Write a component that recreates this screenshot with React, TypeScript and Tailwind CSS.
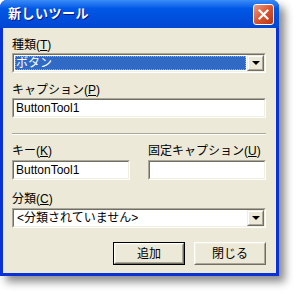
import React from 'react';

const font = { fontFamily: '"Liberation Sans", "Noto Sans CJK JP", sans-serif' };

const Label: React.FC<{ text: string; accel: string }> = ({ text, accel }) => (
  <div className="text-[12px] leading-[14px] text-black h-[14px] whitespace-nowrap">
    {text}(<span className="underline">{accel}</span>)
  </div>
);

const Sunken: React.FC<{ className?: string; children?: React.ReactNode }> = ({ className = '', children }) => (
  <div className={`border border-t-[#ACA899] border-l-[#ACA899] border-b-white border-r-white ${className}`}>
    <div className="h-full border border-t-[#716F64] border-l-[#716F64] border-b-[#F1EFE2] border-r-[#F1EFE2] bg-white flex items-center">
      {children}
    </div>
  </div>
);

const DropButton = () => (
  <div className="w-[17px] h-full shrink-0 border border-t-[#F1EFE2] border-l-[#F1EFE2] border-b-[#716F64] border-r-[#716F64] bg-[#ECE9D8]">
    <div className="h-full border border-t-white border-l-white border-b-[#ACA899] border-r-[#ACA899] flex items-center justify-center">
      <div className="w-0 h-0 border-l-[4px] border-r-[4px] border-t-[4px] border-l-transparent border-r-transparent border-t-black" />
    </div>
  </div>
);

const PushButton: React.FC<{ label: string; isDefault?: boolean }> = ({ label, isDefault }) => (
  <div className={`w-[72px] h-[23px] ${isDefault ? 'border border-black' : ''}`}>
    <div className="h-full border border-t-white border-l-white border-b-[#716F64] border-r-[#716F64] bg-[#ECE9D8]">
      <div className="h-full border border-t-[#F1EFE2] border-l-[#F1EFE2] border-b-[#ACA899] border-r-[#ACA899] flex items-center justify-center text-[12px] text-black">
        {label}
      </div>
    </div>
  </div>
);

export default function App() {
  return (
    <div className="w-[298px] h-[297px] bg-white" style={font}>
      <div className="w-[279px] rounded-t-[7px] bg-[#0831D9] shadow-[6px_6px_8px_rgba(0,0,0,0.45)] overflow-hidden">
        {/* title bar */}
        <div className="h-[28px] flex items-center justify-between pl-[8px] pr-[5px] bg-gradient-to-b from-[#3A8CF6] via-[#0058E6] via-30% to-[#0046D2]">
          <span className="text-white font-bold text-[13px] [text-shadow:1px_1px_0_#0A1883] tracking-[0.5px]">新しいツール</span>
          <div className="w-[21px] h-[21px] rounded-[3px] border border-white bg-gradient-to-br from-[#E89A82] via-[#D8552E] to-[#B83413] flex items-center justify-center">
            <svg width="11" height="11" viewBox="0 0 11 11">
              <path d="M1.5 1.5 L9.5 9.5 M9.5 1.5 L1.5 9.5" stroke="white" strokeWidth="2.2" strokeLinecap="square" />
            </svg>
          </div>
        </div>
        {/* body */}
        <div className="mx-[3px] mb-[3px] bg-[#ECE9D8] pl-[9px] pr-[10px] pt-[10px] pb-[8px] flex flex-col">
          <Label text="種類" accel="T" />
          <Sunken className="h-[20px] mt-[1px]">
            <div className="flex-1 h-full p-[1px]">
              <div className="h-full bg-[#316AC5] outline outline-1 outline-dotted outline-[#E8A317] -outline-offset-1 text-white text-[12px] leading-[14px] flex items-center pl-[1px]">
                ボタン
              </div>
            </div>
            <DropButton />
          </Sunken>

          <div className="mt-[10px]">
            <Label text="キャプション" accel="P" />
          </div>
          <Sunken className="h-[20px] mt-[1px]">
            <span className="pl-[2px] text-[12px] text-black">ButtonTool1</span>
          </Sunken>

          <div className="mt-[15px] h-[2px] border-t border-t-[#ACA899] border-b border-b-white" />

          <div className="mt-[9px] flex gap-[18px]">
            <div className="w-[118px] flex flex-col">
              <Label text="キー" accel="K" />
              <Sunken className="h-[20px] mt-[2px]">
                <span className="pl-[2px] text-[12px] text-black">ButtonTool1</span>
              </Sunken>
            </div>
            <div className="flex-1 flex flex-col">
              <Label text="固定キャプション" accel="U" />
              <Sunken className="h-[20px] mt-[2px]" />
            </div>
          </div>

          <div className="mt-[12px]">
            <Label text="分類" accel="C" />
          </div>
          <Sunken className="h-[20px] mt-[2px]">
            <span className="flex-1 pl-[3px] text-[12px] text-black">&lt;分類されていません&gt;</span>
            <DropButton />
          </Sunken>

          <div className="mt-[14px] flex justify-end gap-[9px]">
            <PushButton label="追加" isDefault />
            <PushButton label="閉じる" />
          </div>
        </div>
      </div>
    </div>
  );
}
